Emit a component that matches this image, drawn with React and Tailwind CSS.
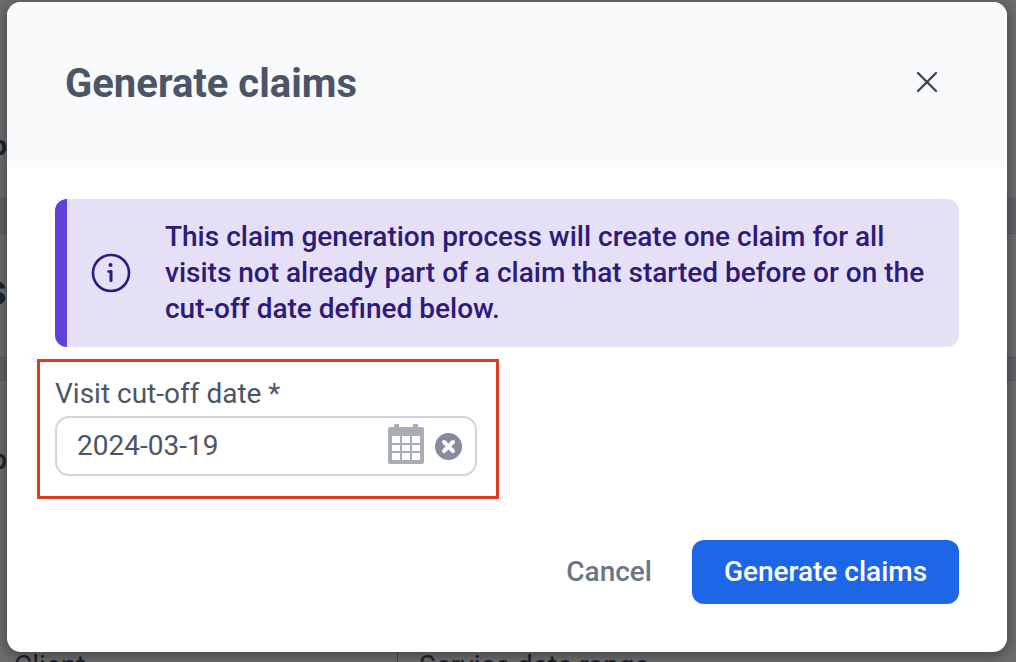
import { X } from 'lucide-react';

const font = { fontFamily: 'Roboto, sans-serif' };

function InfoIcon() {
  return (
    <svg width="40" height="40" viewBox="0 0 40 40" fill="none" stroke="#2e1a78" strokeWidth="2.6" strokeLinecap="round">
      <circle cx="20" cy="20" r="18" />
      <path d="M20 18.5v9" strokeWidth="3" />
      <circle cx="19.5" cy="12" r="2" fill="#2e1a78" stroke="none" />
      <path d="M17.6 18.5H20" />
    </svg>
  );
}

function CalendarIcon() {
  return (
    <svg width="36" height="40" viewBox="0 0 36 40" fill="#a8adb6">
      <rect x="6" y="0" width="5" height="6" rx="1" />
      <rect x="25" y="0" width="5" height="6" rx="1" />
      <path fillRule="evenodd" d="M2 3h32a2 2 0 0 1 2 2v33a2 2 0 0 1-2 2H2a2 2 0 0 1-2-2V5a2 2 0 0 1 2-2zM4 12v7h8v-7zM14 12v7h8v-7zM24 12v7h8v-7zM4 21v6h8v-6zM14 21v6h8v-6zM24 21v6h8v-6zM4 29v7h8v-7zM14 29v7h8v-7zM24 29v7h8v-7z" />
    </svg>
  );
}

function ClearIcon() {
  return (
    <svg width="27" height="27" viewBox="0 0 27 27">
      <circle cx="13.5" cy="13.5" r="13.5" fill="#848d9e" />
      <path d="M9 9l9 9M18 9l-9 9" stroke="#fff" strokeWidth="4" strokeLinecap="round" />
    </svg>
  );
}

// the page behind the dialog, only its edges show
function BackPage() {
  return (
    <div className="h-full flex flex-col text-[#1c2333]">
      <div className="h-[197px] pt-[128px] font-bold text-[28px] leading-[36px]">
        <div className="w-[7px] overflow-hidden flex justify-end">p</div>
      </div>
      <div className="h-[37px] bg-[#606266] border-b border-[#58595c]" />
      <div className="h-[123px] pt-[31px] text-[44px] leading-[50px] font-medium">
        <div className="w-[7px] overflow-hidden flex justify-end">s</div>
      </div>
      <div className="h-[24px] bg-[#606266] border-y border-[#58595c]" />
      <div className="h-[271px] pt-[61px] text-[28px] leading-[36px] font-medium">
        <div className="w-[7px] overflow-hidden flex justify-end">p</div>
      </div>
    </div>
  );
}

export default function App() {
  return (
    <div className="relative w-[1016px] h-[662px] overflow-hidden bg-[#6c6c6d]" style={font}>
      <BackPage />

      <div className="absolute left-0 right-0 top-[652px] h-[10px] text-[28px] leading-[36px] text-[#1f2228]">
        <span className="absolute left-[14px] -top-[4px]">Client</span>
        <span className="absolute left-[397px] top-0 w-[1px] h-[10px] bg-[#45464a]" />
        <span className="absolute left-[419px] -top-[4px]">Service date range</span>
      </div>

      <div className="absolute left-[7px] top-[2px] w-[1000px] h-[650px] bg-white rounded-[14px] overflow-hidden shadow-[0_3px_14px_rgba(0,0,0,0.4)] flex flex-col">
        <div className="h-[165px] bg-[#f9fafc] flex justify-between pl-[58px] pr-[62px] pt-[58px]">
          <h1 className="text-[40px] leading-[48px] font-bold text-[#4b5567]">Generate claims</h1>
          <button className="h-[44px] text-[#3a4150]">
            <X size={36} strokeWidth={1.5} />
          </button>
        </div>

        <div className="px-[48px] pt-[32px]">
          <div className="h-[148px] bg-[#e6e0f7] rounded-[12px] overflow-hidden flex items-center">
            <div className="w-[12px] h-full bg-[#6141da]" />
            <div className="w-[98px] flex justify-center pr-[10px] shrink-0">
              <InfoIcon />
            </div>
            <p className="text-[28px] leading-[36px] font-medium text-[#2e1a78] w-[780px]">
              This claim generation process will create one claim for all visits not already part of a claim that started before or on the cut-off date defined below.
            </p>
          </div>

          <div className="mt-[12px] w-[462px] -ml-[18px] h-[140px] border-[3px] border-[#e03a22] pl-[15px] pt-[14px]">
            <label className="block text-[28px] leading-[36px] text-[#4b5567]">Visit cut-off date *</label>
            <div className="mt-[4px] w-[422px] h-[60px] border-[2px] border-[#d1d5de] rounded-[14px] flex items-center pl-[20px] pr-[13px]">
              <span className="text-[28px] text-[#4b5567] flex-1">2024-03-19</span>
              <span className="-mt-[4px] ml-[1px]"><CalendarIcon /></span>
              <span className="ml-[11px]"><ClearIcon /></span>
            </div>
          </div>

          <div className="mt-[41px] flex justify-end items-center">
            <button className="text-[28px] font-medium text-[#6b7585] mr-[40px]">Cancel</button>
            <button className="w-[267px] h-[64px] bg-[#1d66e8] rounded-[12px] text-[28px] font-medium text-white">Generate claims</button>
          </div>
        </div>
      </div>
    </div>
  );
}
